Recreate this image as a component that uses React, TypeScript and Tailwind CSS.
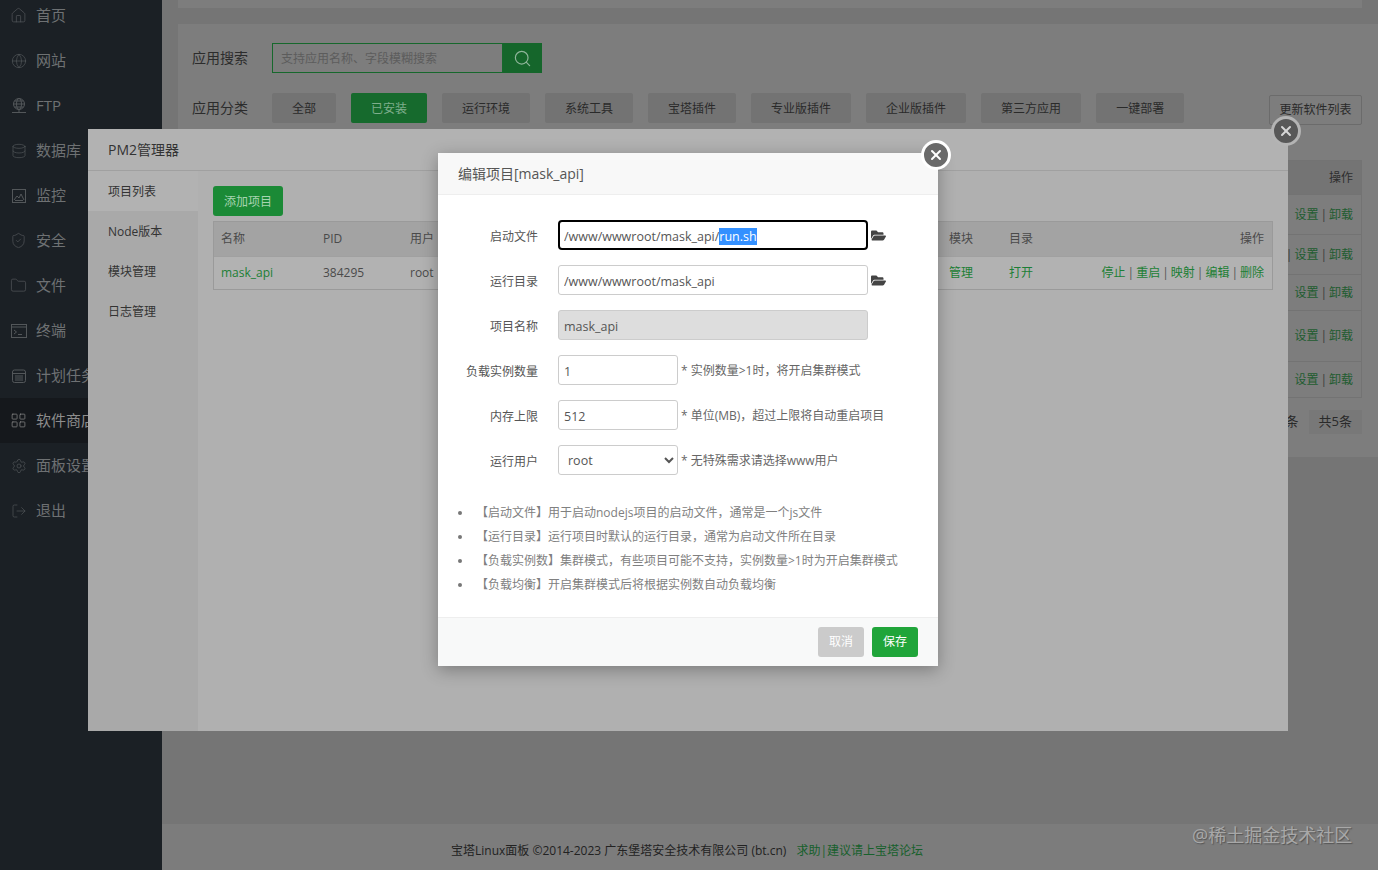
import { useEffect, useRef } from 'react'
import { Database, Folder, Globe, House, LayoutGrid, LogOut, Search, Settings, ShieldCheck, X } from 'lucide-react'
import { FaFolderOpen } from 'react-icons/fa'

const font = { fontFamily: '"Open Sans", "Noto Sans CJK SC", sans-serif' }

// 线条图标里 lucide 没有的几个
const FtpIcon = () => (
  <svg width="18" height="18" viewBox="0 0 18 18" fill="none" stroke="currentColor" strokeWidth="1">
    <circle cx="9" cy="7" r="5.5" />
    <ellipse cx="9" cy="7" rx="2.5" ry="5.5" />
    <path d="M3.5 7h11M4.5 4h9M4.5 10h9M9 12.5V15M2 15.5h14" />
  </svg>
)
const MonitorIcon = () => (
  <svg width="16" height="16" viewBox="0 0 16 16" fill="none" stroke="currentColor" strokeWidth="1">
    <rect x="1.5" y="1.5" width="13" height="13" />
    <path d="M3 12l3-4 2 2 2-4 3 6M4 12.5h8" />
  </svg>
)
const TerminalIcon = () => (
  <svg width="16" height="14" viewBox="0 0 16 14" fill="none" stroke="currentColor" strokeWidth="1">
    <rect x="0.5" y="0.5" width="15" height="13" />
    <path d="M0.5 3h15M3 6l2.5 2L3 10M7 10.5h4" />
  </svg>
)
const TaskIcon = () => (
  <svg width="16" height="16" viewBox="0 0 16 16" fill="none" stroke="currentColor" strokeWidth="1">
    <rect x="1.5" y="2" width="13" height="12.5" rx="2" />
    <path d="M1.5 5.5h13M4 8h8M4 10h8M4 12h8" />
  </svg>
)

const menu = [
  { name: '首页', icon: <House size={17} strokeWidth={1} /> },
  { name: '网站', icon: <Globe size={16} strokeWidth={1} /> },
  { name: 'FTP', icon: <FtpIcon /> },
  { name: '数据库', icon: <Database size={16} strokeWidth={1} /> },
  { name: '监控', icon: <MonitorIcon /> },
  { name: '安全', icon: <ShieldCheck size={17} strokeWidth={1} /> },
  { name: '文件', icon: <Folder size={17} strokeWidth={1} /> },
  { name: '终端', icon: <TerminalIcon /> },
  { name: '计划任务', icon: <TaskIcon /> },
  { name: '软件商店', icon: <LayoutGrid size={17} strokeWidth={1} />, active: true },
  { name: '面板设置', icon: <Settings size={16} strokeWidth={1} /> },
  { name: '退出', icon: <LogOut size={16} strokeWidth={1} /> },
]

const tabs = ['全部', '已安装', '运行环境', '系统工具', '宝塔插件', '专业版插件', '企业版插件', '第三方应用', '一键部署']

const rowHeights = ['h-[40px]', 'h-[40px]', 'h-[36px]', 'h-[51px]', 'h-[36px]']

const tips = [
  '【启动文件】用于启动nodejs项目的启动文件，通常是一个js文件',
  '【运行目录】运行项目时默认的运行目录，通常为启动文件所在目录',
  '【负载实例数】集群模式，有些项目可能不支持，实例数量>1时为开启集群模式',
  '【负载均衡】开启集群模式后将根据实例数自动负载均衡',
]

function Field({ label, children }: { label: string; children: React.ReactNode }) {
  return (
    <div className="flex h-[30px] items-center mb-[15px]">
      <label className="w-[100px] pt-[4px] text-right text-xs text-[#555] mr-5 shrink-0">{label}</label>
      {children}
    </div>
  )
}

function Sep() {
  return <i className="mx-[2px] not-italic text-[#555]">|</i>
}

function CloseButton({ dim }: { dim?: boolean }) {
  return (
    <div
      className={`flex h-[30px] w-[30px] items-center justify-center rounded-full border-[3px] ${
        dim ? 'bg-[#585858] border-[#b4b4b4] text-[#d6d6d6]' : 'bg-[#6a6a6a] border-white text-white'
      }`}
    >
      <X size={16} strokeWidth={3} />
    </div>
  )
}

export default function App() {
  const startFile = useRef<HTMLInputElement>(null)

  useEffect(() => {
    // 启动文件的文件名处于选中状态
    startFile.current?.focus()
    startFile.current?.setSelectionRange(22, 28)
  }, [])

  return (
    <div className="relative flex h-screen w-full overflow-hidden bg-[#757575]" style={font}>
      {/* 左侧菜单 */}
      <aside className="w-[162px] shrink-0 bg-[#1b2025] -mt-[7px]">
        {menu.map((item) => (
          <div
            key={item.name}
            className={`flex h-[45px] items-center ${item.active ? 'bg-[#15181c] text-[#8c8c8c]' : 'text-[#6e7173]'}`}
          >
            <span className={`flex w-[36px] justify-center pl-[1px] ${item.active ? 'text-[#8c8c8c]' : 'text-[#53575a]'}`}>
              {item.icon}
            </span>
            <span className="text-[15px] whitespace-nowrap">{item.name}</span>
          </div>
        ))}
      </aside>

      {/* 软件商店 */}
      <main className="flex flex-1 flex-col min-w-0">
        <div className="mx-4 h-2 bg-[#7d7d7d] mb-4" />
        <div className="ml-4 mr-0 h-[433px] bg-[#7d7d7d] pl-[14px] pr-4 pt-[19px]">
          <div className="flex items-center h-[30px]">
            <span className="w-[80px] text-sm text-[#2c2c2c]">应用搜索</span>
            <div className="flex w-[270px] h-[30px]">
              <input
                readOnly
                placeholder="支持应用名称、字段模糊搜索"
                className="w-[231px] h-full border border-[#16682c] bg-[#7d7d7d] px-2 text-xs placeholder:text-[#5c5c5c] outline-none"
              />
              <div className="flex w-[39px] items-center justify-center bg-[#15662b] text-[#8fb59a]">
                <Search size={19} strokeWidth={1.5} />
              </div>
            </div>
          </div>
          <div className="flex items-center mt-5 h-[30px]">
            <span className="w-[80px] text-sm text-[#2c2c2c]">应用分类</span>
            <div className="flex gap-[15px]">
              {tabs.map((t) => (
                <span
                  key={t}
                  className={`flex h-[30px] items-center px-5 pt-px text-xs rounded-[2px] ${
                    t === '已安装' ? 'bg-[#166a2d] text-[#7fae8c]' : 'bg-[#737373] text-[#2a2a2a]'
                  }`}
                >
                  {t}
                </span>
              ))}
            </div>
            <span className="ml-auto flex h-[30px] w-[93px] mt-1 items-center justify-center border border-[#6b6b6b] rounded-[2px] text-xs text-[#2a2a2a]">
              更新软件列表
            </span>
          </div>
          <div className="mt-[37px] border border-[#737373] text-xs">
            <div className="flex h-[33px] items-center justify-end bg-[#747474] pr-2 text-[#2e2e2e]">操作</div>
            {rowHeights.map((h, i) => (
              <div key={i} className={`flex ${h} items-center justify-end border-t border-[#737373] pr-2 text-[#1f5c30]`}>
                {i === 1 && (
                  <>
                    更新
                    <span className="mx-[2px] text-[#3c3c3c]">|</span>
                  </>
                )}
                设置<span className="mx-[2px] text-[#3c3c3c]">|</span>卸载
              </div>
            ))}
          </div>
          <div className="flex justify-end mt-3 text-[13px] text-[#2a2a2a]">
            <span className="flex h-[24px] items-center pr-[10px]">从1-5条</span>
            <span className="flex h-[24px] items-center pl-[10px] pr-[10px] bg-[#787878]">共5条</span>
          </div>
        </div>
        <div className="flex-1" />
        <footer className="flex h-[46px] items-center justify-center pt-[8px] pr-[166px] bg-[#7c7c7c] text-xs text-[#222]">
          <span>宝塔Linux面板 ©2014-2023 广东堡塔安全技术有限公司 (bt.cn)</span>
          <span className="ml-[10px] text-[#17602c]">求助|建议请上宝塔论坛</span>
        </footer>
      </main>

      {/* PM2管理器弹窗 */}
      <section className="absolute left-[88px] top-[129px] flex h-[602px] w-[1200px] flex-col bg-[#b0b0b0]">
        <header className="h-[42px] shrink-0 border-b border-[#a0a0a0] bg-[#b2b2b2] pl-5 flex items-center text-sm text-[#333]">
          PM2管理器
        </header>
        <div className="flex flex-1">
          <nav className="w-[110px] bg-[#a9a9a9] text-xs text-[#333]">
            {['项目列表', 'Node版本', '模块管理', '日志管理'].map((n, i) => (
              <div key={n} className={`flex h-[40px] items-center pl-5 pt-px ${i === 0 ? 'bg-[#b2b2b2]' : ''}`}>
                {n}
              </div>
            ))}
          </nav>
          <div className="flex-1 pl-[15px] pr-[15px] pt-[15px] text-xs">
            <button className="h-[30px] w-[70px] pt-px rounded-[3px] bg-[#1b8a36] text-[#a7d4b1]">添加项目</button>
            <div className="mt-[5px] border border-[#9a9a9a]">
              <div className="grid grid-cols-[102px_87px_539px_60px_1fr] h-[34px] items-center bg-[#a3a3a3] pl-[7px] pr-2 text-[#4a4a4a]">
                <span>名称</span>
                <span>PID</span>
                <span>用户</span>
                <span>模块</span>
                <span className="flex justify-between">目录<span>操作</span></span>
              </div>
              <div className="grid grid-cols-[102px_87px_539px_60px_1fr] h-[33px] items-center border-t border-[#a0a0a0] bg-[#b2b2b2] pl-[7px] pr-2 text-[#4a4a4a]">
                <span className="text-[#1c7f35]">mask_api</span>
                <span>384295</span>
                <span>root</span>
                <span className="text-[#1c7f35]">管理</span>
                <span className="flex justify-between text-[#1c7f35]">
                  打开
                  <span>
                    停止<Sep />重启<Sep />映射<Sep />编辑<Sep />删除
                  </span>
                </span>
              </div>
            </div>
          </div>
        </div>
      </section>
      <div className="absolute left-[1271px] top-[116px]">
        <CloseButton dim />
      </div>

      {/* 编辑项目弹窗 */}
      <section className="absolute left-[438px] top-[153px] w-[500px] h-[513px] flex flex-col bg-white shadow-[0_4px_16px_rgba(0,0,0,0.3)]">
        <header className="flex h-[42px] shrink-0 items-center border-b border-[#eee] bg-[#f8f8f8] pl-5 text-sm text-[#555]">
          编辑项目[mask_api]
        </header>
        <div className="flex-1 pt-[25px]">
          <Field label="启动文件">
            <input
              ref={startFile}
              readOnly
              defaultValue="/www/wwwroot/mask_api/run.sh"
              className="w-[310px] h-[30px] rounded-[4px] border-2 border-black pl-[4px] pt-[3px] text-[12.5px] text-[#555] outline-none selection:bg-[#3390ff] selection:text-white"
            />
            <FaFolderOpen className="ml-[3px] text-[#444]" size={15} />
          </Field>
          <Field label="运行目录">
            <input
              readOnly
              defaultValue="/www/wwwroot/mask_api"
              className="w-[310px] h-[30px] rounded-[3px] border border-[#ccc] pl-[5px] pt-[3px] text-[12.5px] text-[#555] outline-none"
            />
            <FaFolderOpen className="ml-[3px] text-[#444]" size={15} />
          </Field>
          <Field label="项目名称">
            <input
              disabled
              defaultValue="mask_api"
              className="w-[310px] h-[30px] rounded-[3px] border border-[#ccc] bg-[#ddd] pl-[5px] pt-[3px] text-[12.5px] text-[#555] outline-none"
            />
          </Field>
          <Field label="负载实例数量">
            <input
              readOnly
              defaultValue="1"
              className="w-[120px] h-[30px] rounded-[3px] border border-[#ccc] pl-[5px] pt-[3px] text-[12.5px] text-[#555] outline-none"
            />
            <span className="ml-[3px] pt-[2px] text-xs text-[#666]">* 实例数量&gt;1时，将开启集群模式</span>
          </Field>
          <Field label="内存上限">
            <input
              readOnly
              defaultValue="512"
              className="w-[120px] h-[30px] rounded-[3px] border border-[#ccc] pl-[5px] pt-[3px] text-[12.5px] text-[#555] outline-none"
            />
            <span className="ml-[3px] pt-[2px] text-xs text-[#666]">* 单位(MB)，超过上限将自动重启项目</span>
          </Field>
          <Field label="运行用户">
            <select
              defaultValue="root"
              className="w-[120px] h-[30px] rounded-[3px] border border-[#ccc] bg-white pl-[5px] text-[12.5px] text-[#555] outline-none"
            >
              <option value="root">root</option>
              <option value="www">www</option>
            </select>
            <span className="ml-[3px] pt-[2px] text-xs text-[#666]">* 无特殊需求请选择www用户</span>
          </Field>
          <ul className="mt-[26px] pl-5 text-xs leading-[24px] text-[#808080]">
            {tips.map((t) => (
              <li key={t} className="flex items-center gap-4">
                <span className="h-1 w-1 rounded-full bg-[#777]" />
                <span className="-ml-[2px]">{t}</span>
              </li>
            ))}
          </ul>
        </div>
        <footer className="flex h-[49px] shrink-0 items-center justify-end gap-2 border-t border-[#eee] bg-[#f8f9f9] pr-5">
          <button className="h-[30px] w-[46px] rounded-[3px] bg-[#cbcbcb] text-xs text-white">取消</button>
          <button className="h-[30px] w-[46px] rounded-[3px] bg-[#20a53a] text-xs text-white">保存</button>
        </footer>
      </section>
      <div className="absolute left-[921px] top-[140px]">
        <CloseButton />
      </div>

      {/* 水印 */}
      <span className="absolute left-[1192px] top-[821px] text-lg text-[#a8a8a8] [text-shadow:1px_1px_1px_#555]">
        @稀土掘金技术社区
      </span>
    </div>
  )
}
